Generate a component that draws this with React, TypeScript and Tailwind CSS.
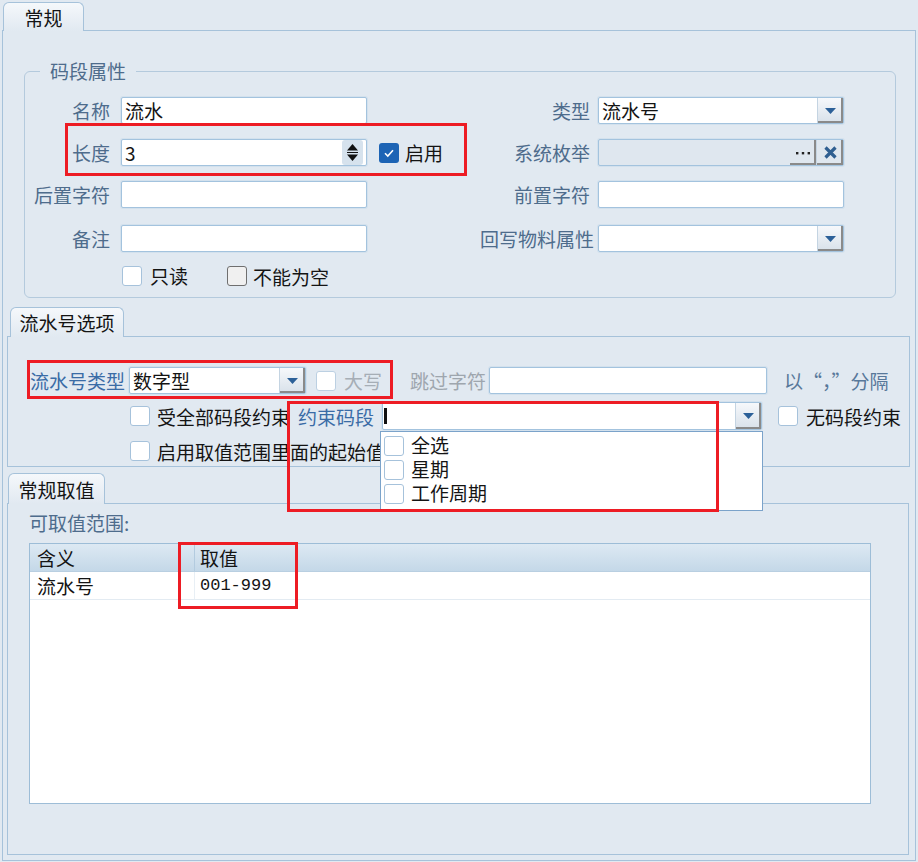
import React from 'react';

type Kind = 'off' | 'on' | 'gray' | 'dis';

function Check({ kind = 'off' }: { kind?: Kind }) {
  if (kind === 'on') {
    return (
      <div className="flex h-[20px] w-[20px] shrink-0 items-center justify-center rounded-[3px] bg-[#1d64b5]">
        <svg width="12" height="10" viewBox="0 0 12 10">
          <path d="M2 5.2L4.8 8L10 2.2" fill="none" stroke="#fff" strokeWidth="1.6" />
        </svg>
      </div>
    );
  }
  if (kind === 'gray') {
    return <div className="h-[20px] w-[20px] shrink-0 rounded-[3px] border border-[#6f6f6f] bg-[#f0f0f0]" />;
  }
  if (kind === 'dis') {
    return <div className="h-[20px] w-[20px] shrink-0 rounded-[3px] border border-[#bcd0e2] bg-white" />;
  }
  return <div className="h-[20px] w-[20px] shrink-0 rounded-[3px] border border-[#a6c2db] bg-white" />;
}

function Tab({ className, children }: { className: string; children: React.ReactNode }) {
  return (
    <div
      className={`flex items-center justify-center rounded-t-[6px] border border-b-0 border-[#a6c2da] bg-linear-to-b from-[#f5f8fb] to-[#e1e9f1] text-[#141414] ${className}`}
    >
      {children}
    </div>
  );
}

function DropBtn() {
  return (
    <div className="flex w-[26px] shrink-0 items-center justify-center border-l border-[#c4d4e2] bg-linear-to-b from-[#f6f8fb] to-[#d8e1ea] shadow-[inset_-2px_-2px_0_#8a8a8a]">
      <svg width="11" height="6" viewBox="0 0 11 6">
        <path d="M0 0H11L5.5 6Z" fill="#2c6098" />
      </svg>
    </div>
  );
}

function Spinner() {
  return (
    <div className="flex h-[25px] w-[21px] items-center justify-center rounded-[3px] bg-[#d6e2ed]">
      <svg width="13" height="19" viewBox="0 0 13 19">
        <path d="M6.5 1L12 7.5H1Z" fill="#111" />
        <path d="M1 9.5H12" stroke="#111" strokeWidth="1" />
        <path d="M6.5 18L12 11.5H1Z" fill="#111" />
      </svg>
    </div>
  );
}

function Field({
  className,
  children,
  disabled,
  right,
}: {
  className: string;
  children?: React.ReactNode;
  disabled?: boolean;
  right?: React.ReactNode;
}) {
  return (
    <div
      className={`flex h-full items-stretch rounded-[2px] border border-[#a3c3de] shadow-[0_0_0_1px_#d3e1ed] ${disabled ? 'bg-[#dfe7ef]' : 'bg-white'} ${className}`}
    >
      <div className="flex flex-1 items-center pl-[3px] text-[#141414]">{children}</div>
      {right}
    </div>
  );
}

const label = 'text-[#4e6c8c]';

export default function App() {
  return (
    <div className="relative h-[862px] w-[918px] overflow-hidden bg-[#e1e9f1] font-['Noto_Sans_CJK_SC',sans-serif] text-[19px] leading-none text-[#141414]">
      {/* top tab */}
      <div className="relative z-10 h-[31px] pl-[3px] pt-[2px]">
        <Tab className="h-[29px] w-[81px]">常规</Tab>
      </div>

      <div className="-mt-px ml-[2px] h-[831px] w-[914px] border border-[#a6c2da]">
        {/* 码段属性 */}
        <div className="relative ml-[21px] mt-[40px] h-[227px] w-[872px] rounded-[6px] border border-[#b4cadd] pt-[25px]">
          <div className={`absolute left-[15px] top-[-13px] bg-[#e1e9f1] px-[10px] leading-[24px] ${label}`}>码段属性</div>

          <div className="flex h-[27px] items-center">
            <div className={`w-[96px] pr-[11px] text-right ${label}`}>名称</div>
            <Field className="w-[246px]">流水</Field>
            <div className={`flex w-[231px] justify-end pr-[8px] ${label}`}>类型</div>
            <Field className="w-[246px]" right={<DropBtn />}>流水号</Field>
          </div>

          <div className="mt-[15px] flex h-[27px] items-center">
            <div className={`w-[96px] pr-[11px] text-right ${label}`}>长度</div>
            <Field
              className="w-[246px]"
              right={
                <div className="flex items-center pr-[3px]">
                  <Spinner />
                </div>
              }
            >
              3
            </Field>
            <div className="flex w-[231px] items-center justify-between pl-[12px] pr-[8px]">
              <div className="flex items-center">
                <Check kind="on" />
                <span className="ml-[6px]">启用</span>
              </div>
              <span className={label}>系统枚举</span>
            </div>
            <Field
              className="w-[246px]"
              disabled
              right={
                <div className="flex">
                  <div className="flex w-[26px] items-center justify-center shadow-[inset_-2px_-2px_0_#8a8a8a]">
                    <svg width="16" height="4" viewBox="0 0 16 4">
                      <rect x="1" y="1" width="2.4" height="2.4" fill="#222" />
                      <rect x="6.8" y="1" width="2.4" height="2.4" fill="#222" />
                      <rect x="12.6" y="1" width="2.4" height="2.4" fill="#222" />
                    </svg>
                  </div>
                  <div className="flex w-[27px] items-center justify-center border-l border-[#c4d4e2] shadow-[inset_-2px_-2px_0_#8a8a8a]">
                    <svg width="15" height="15" viewBox="0 0 15 15">
                      <path d="M2.5 2.5L12.5 12.5M12.5 2.5L2.5 12.5" stroke="#2f5f91" strokeWidth="3.2" />
                    </svg>
                  </div>
                </div>
              }
            />
          </div>

          <div className="mt-[15px] flex h-[27px] items-center">
            <div className={`w-[96px] pr-[11px] text-right ${label}`}>后置字符</div>
            <Field className="w-[246px]" />
            <div className={`flex w-[231px] justify-end pr-[8px] ${label}`}>前置字符</div>
            <Field className="w-[246px]" />
          </div>

          <div className="mt-[17px] flex h-[27px] items-center">
            <div className={`w-[96px] pr-[11px] text-right ${label}`}>备注</div>
            <Field className="w-[246px]" />
            <div className={`flex w-[231px] justify-end pr-[4px] ${label}`}>回写物料属性</div>
            <Field className="w-[246px]" right={<DropBtn />} />
          </div>

          <div className="mt-[13px] flex h-[22px] items-center pl-[97px]">
            <Check />
            <span className="ml-[8px] pb-[2px]">只读</span>
            <div className="ml-[39px]">
              <Check kind="gray" />
            </div>
            <span className="ml-[6px]">不能为空</span>
          </div>
        </div>

        {/* 流水号选项 */}
        <div className="relative z-10 -mb-px ml-[7px] mt-[9px] w-[114px]">
          <Tab className="h-[30px] w-[114px]">流水号选项</Tab>
        </div>
        <div className="ml-[4px] h-[131px] w-[903px] border border-[#a6c2da] pt-[30px]">
          <div className="flex h-[27px] items-center">
            <div className="ml-[22px] w-[99px] text-[#3a6ca6]">流水号类型</div>
            <Field className="w-[177px]" right={<DropBtn />}>数字型</Field>
            <div className="ml-[10px]">
              <Check kind="dis" />
            </div>
            <span className="ml-[8px] text-[#a6aeb6]">大写</span>
            <span className="ml-[28px] w-[79px] text-[#9ea6ae]">跳过字符</span>
            <Field className="w-[278px]" />
            <span className="ml-[17px] text-[#58789a]">以“，”分隔</span>
          </div>

          <div className="mt-[8px] flex h-[28px] items-center">
            <div className="ml-[122px]">
              <Check />
            </div>
            <span className="ml-[7px]">受全部码段约束</span>
            <span className="ml-[8px] text-[#3a6ca6]">约束码段</span>
            <Field className="ml-[8px] w-[380px]" right={<DropBtn />}>
              <div className="-ml-[2px] h-[16px] w-[3px] bg-[#111]" />
            </Field>
            <div className="ml-[16px]">
              <Check />
            </div>
            <span className="ml-[8px]">无码段约束</span>
          </div>

          <div className="mt-[10px] flex h-[22px] items-center">
            <div className="ml-[122px]">
              <Check />
            </div>
            <span className="ml-[7px]">启用取值范围里面的起始值</span>
          </div>
        </div>

        {/* 常规取值 */}
        <div className="relative z-10 -mb-px ml-[5px] mt-[6px] w-[97px]">
          <Tab className="h-[31px] w-[97px]">常规取值</Tab>
        </div>
        <div className="ml-[4px] h-[352px] w-[902px] border border-[#a6c2da] pl-[21px] pt-[5px]">
          <div className={`flex h-[27px] items-center ${label}`}>可取值范围:</div>
          <div className="mt-[7px] h-[261px] w-[842px] border border-[#9dbdd7] bg-white">
            <div className="flex h-[28px] border-b border-[#b9cfe1] bg-linear-to-b from-[#dde9f3] to-[#c4d8e8]">
              <div className="flex w-[165px] items-center border-r border-[#b3cbdf] pl-[7px]">含义</div>
              <div className="flex items-center pl-[5px]">取值</div>
            </div>
            <div className="flex h-[28px] border-b border-[#e3ebf2]">
              <div className="flex w-[165px] items-center border-r border-[#e8eff5] pl-[7px]">流水号</div>
              <div className="flex items-center pl-[5px] font-['Liberation_Mono',monospace] text-[17px]">001-999</div>
            </div>
          </div>
        </div>
      </div>

      {/* open drop-down list */}
      <div className="absolute left-[380px] top-[431px] h-[80px] w-[383px] border border-[#7ba3ca] bg-white pl-[3px] pt-[2px]">
        {['全选', '星期', '工作周期'].map((t) => (
          <div key={t} className="flex h-[24px] items-center">
            <Check />
            <span className="ml-[7px] pb-[4px]">{t}</span>
          </div>
        ))}
      </div>

      {/* annotation boxes */}
      <div className="pointer-events-none absolute left-[65px] top-[123px] h-[53px] w-[402px] border-[3px] border-[#ed1c24]" />
      <div className="pointer-events-none absolute left-[27px] top-[360px] h-[39px] w-[366px] border-[3px] border-[#ed1c24]" />
      <div className="pointer-events-none absolute left-[287px] top-[401px] h-[111px] w-[432px] border-[3px] border-[#ed1c24]" />
      <div className="pointer-events-none absolute left-[178px] top-[542px] h-[67px] w-[120px] border-[3px] border-[#ed1c24]" />
    </div>
  );
}
